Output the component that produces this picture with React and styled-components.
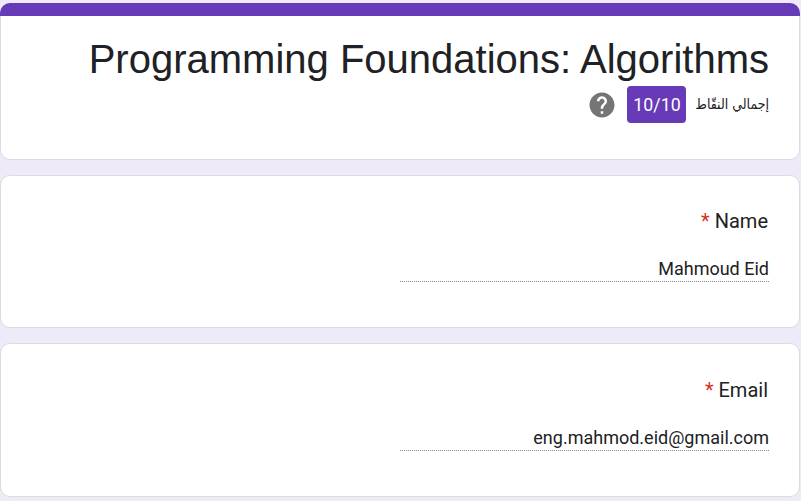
import React from 'react';
import styled, { createGlobalStyle } from 'styled-components';

const GlobalStyle = createGlobalStyle`
  * { box-sizing: border-box; }
  body { margin: 0; background: #eeeaf8; overflow: hidden; }
`;

const Page = styled.main`
  display: flex;
  flex-direction: column;
  gap: 15px;
  height: 501px;
  padding-top: 3px;
  background: #eeeaf8;
  color: #202124;
  font-family: Roboto, sans-serif;
`;

const Card = styled.section`
  width: 800px;
  height: ${({ $height }) => $height}px;
  flex: none;
  background: #fff;
  border: 1px solid #dadce0;
  border-radius: 10px;
  overflow: hidden;
`;

const HeaderCard = styled(Card)`
  border: 0;
  box-shadow: inset 0 0 0 1px #dadce0;
`;

const AccentBar = styled.div`
  height: 13px;
  background: #673ab7;
`;

const HeaderContent = styled.div`
  padding: 16px 31px 0;
`;

const Title = styled.h1`
  margin: 0;
  text-align: right;
  white-space: nowrap;
  font: 400 40px/54px "Liberation Sans", sans-serif;
`;

const ScoreRow = styled.div`
  display: flex;
  align-items: center;
  justify-content: flex-end;
  height: 37px;
`;

const ScoreLabel = styled.span`
  width: 73px;
  padding-bottom: 2px;
  white-space: nowrap;
  font: 400 14px/20px "DejaVu Sans Condensed", "DejaVu Sans", sans-serif;
  font-stretch: condensed;
`;

const Score = styled.span`
  width: 59px;
  height: 37px;
  margin: 0 10px;
  padding-left: 1px;
  border-radius: 4px;
  background: #673ab7;
  color: #fff;
  text-align: center;
  font-size: 17.8px;
  line-height: 38px;
`;

const QuestionCard = styled(Card)`
  padding: ${({ $top }) => $top}px 30px 0;
`;

const Label = styled.h2`
  margin: 0;
  padding-right: 1px;
  text-align: right;
  font-size: 20px;
  font-weight: 400;
  line-height: 28px;
`;

const Required = styled.span`
  color: #d93025;
`;

const Answer = styled.div`
  width: 369px;
  height: 27px;
  margin: 20px 0 0 auto;
  border-bottom: 1px dotted #8b8b8b;
  text-align: right;
  font-size: 18px;
  line-height: 28px;
`;

const HelpIcon = () => (
  <svg width="30" height="30" viewBox="0 0 24 24" fill="#757575">
    <path d="M12 2C6.48 2 2 6.48 2 12s4.48 10 10 10 10-4.48 10-10S17.52 2 12 2zm1 17h-2v-2h2v2zm2.07-7.75l-.9.92C13.45 12.9 13 13.5 13 15h-2v-.5c0-1.1.45-2.1 1.17-2.83l1.24-1.26c.37-.36.59-.86.59-1.41 0-1.1-.9-2-2-2s-2 .9-2 2H8c0-2.21 1.79-4 4-4s4 1.79 4 4c0 .88-.36 1.68-.93 2.25z" />
  </svg>
);

const Question = ({ label, value, height, top }) => (
  <QuestionCard $height={height} $top={top}>
    <Label><Required>*</Required> {label}</Label>
    <Answer>{value}</Answer>
  </QuestionCard>
);

export default function App() {
  return (
    <Page>
      <GlobalStyle />
      <HeaderCard as="header" $height={157}>
        <AccentBar />
        <HeaderContent>
          <Title>Programming Foundations: Algorithms</Title>
          <ScoreRow>
            <HelpIcon />
            <Score>10/10</Score>
            <ScoreLabel lang="ar" dir="rtl">إجمالي النقّاط</ScoreLabel>
          </ScoreRow>
        </HeaderContent>
      </HeaderCard>
      <Question label="Name" value="Mahmoud Eid" height={153} top={31} />
      <Question label="Email" value="eng.mahmod.eid@gmail.com" height={154} top={32} />
    </Page>
  );
}
